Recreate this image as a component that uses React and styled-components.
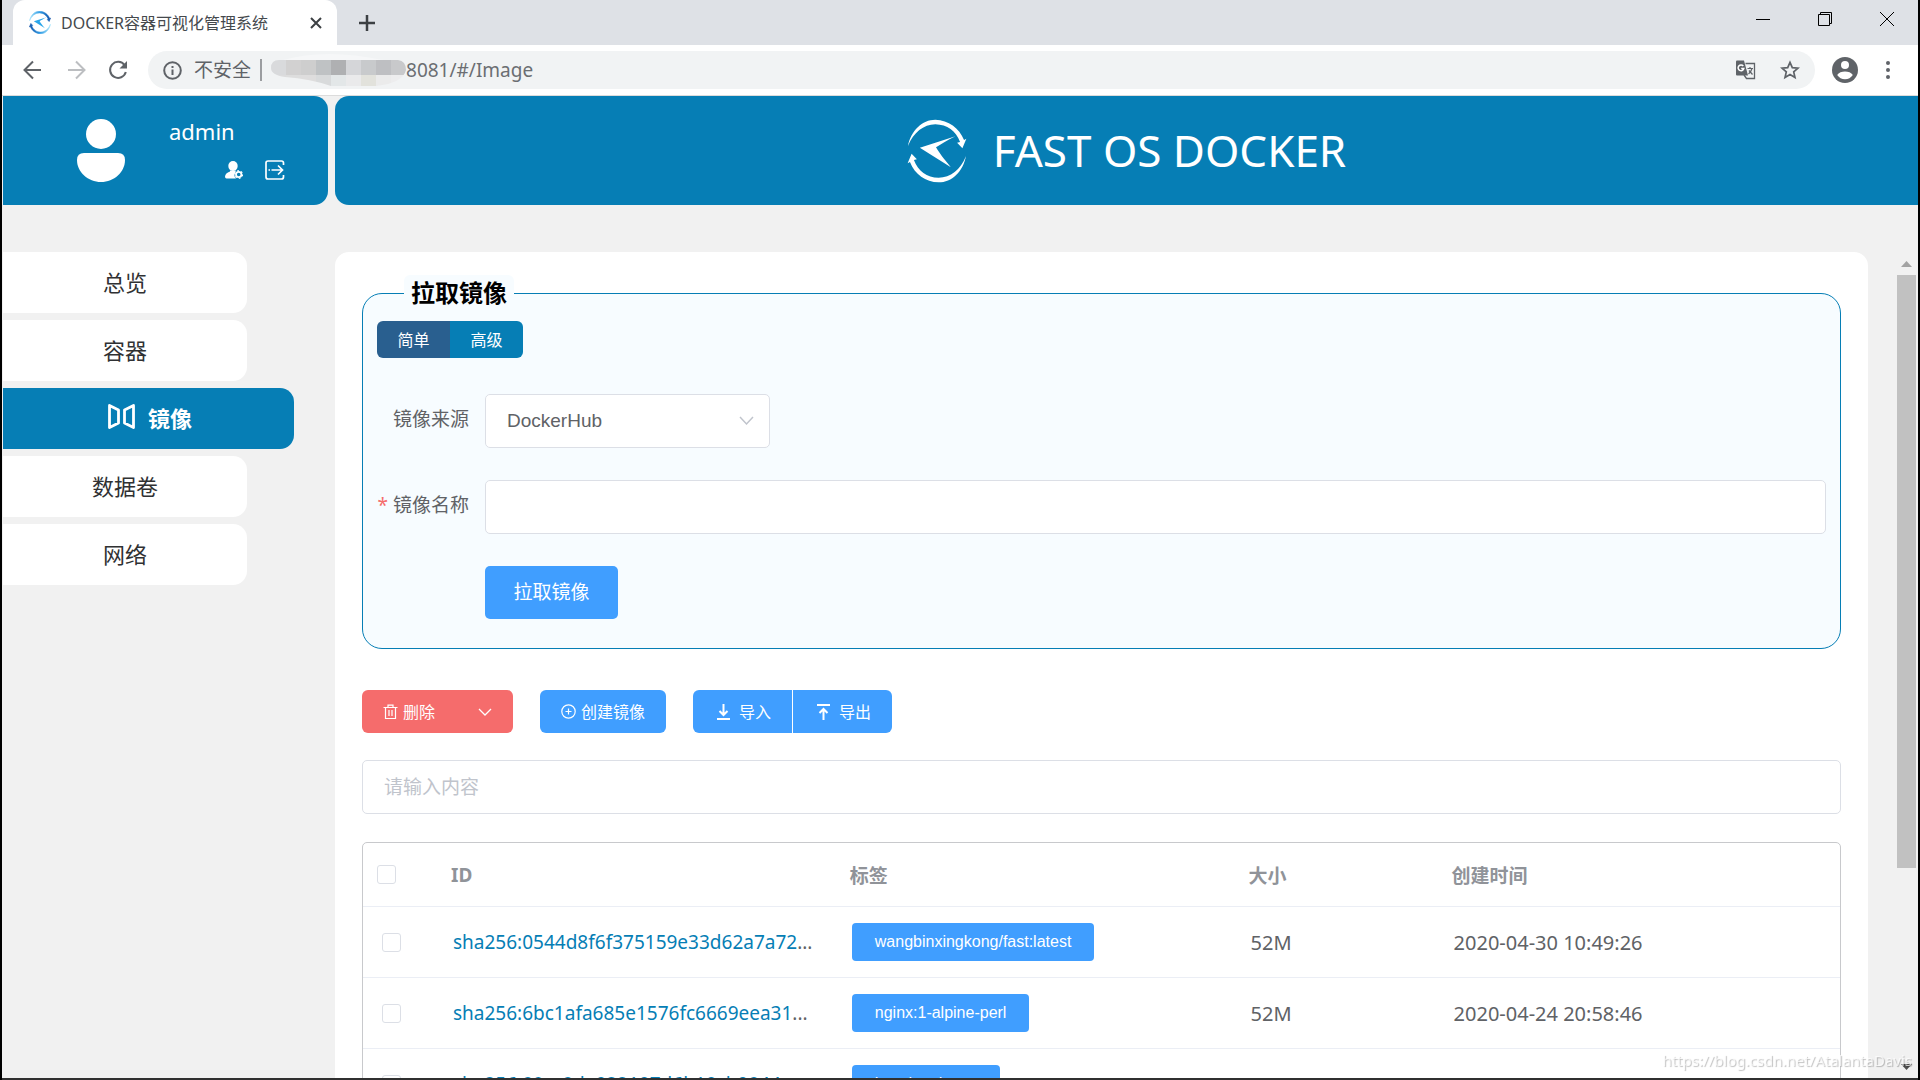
import { useState } from "react";
import styled, { createGlobalStyle } from "styled-components";

const BLUE = "#067eb5";
const PRIMARY = "#409eff";
const DANGER = "#f56c6c";
const SANS = `"Noto Sans", "Noto Sans CJK SC", sans-serif`;
const ARIAL = `"Liberation Sans", "Noto Sans CJK SC", sans-serif`;

const GlobalStyle = createGlobalStyle`
  * {
    box-sizing: border-box;
  }
  body {
    margin: 0;
    background: #f1f1f1;
    font-family: ${SANS};
  }
  button, input, select {
    font-family: inherit;
    margin: 0;
  }
  button {
    border: 0;
    padding: 0;
    background: none;
    cursor: pointer;
  }
  svg {
    display: block;
    flex: none;
  }
`;

/* ---------- browser window ---------- */

const Window = styled.div`
  height: 100vh;
  display: flex;
  flex-direction: column;
  overflow: hidden;
  border: solid #000;
  border-width: 0 2px;
  box-shadow: inset 0 -2px 0 #303030;
  padding-bottom: 2px;
`;

const TabStrip = styled.div`
  display: flex;
  flex: none;
  height: 45px;
  padding-left: 11px;
  background: #dee1e6;
`;

const Tab = styled.div`
  display: flex;
  align-items: center;
  width: 324px;
  padding: 0 15px 0 16px;
  border-radius: 12px 12px 0 0;
  background: #fff;
`;

const TabTitle = styled.span`
  flex: 1;
  margin-left: 10px;
  font-size: 16px;
  line-height: 24px;
  white-space: nowrap;
  color: #45494d;
`;

const NewTab = styled.button`
  display: grid;
  place-items: center;
  width: 60px;
`;

const WindowButtons = styled.div`
  display: flex;
  align-items: flex-start;
  gap: 48px;
  margin-left: auto;
  padding: 12px 24px 0 0;
`;

const AddressBar = styled.div`
  display: flex;
  align-items: center;
  flex: none;
  height: 51px;
  padding: 0 28px 0 20px;
  background: #fff;
  border-bottom: 1px solid #dcdcdc;
`;

const NavButtons = styled.div`
  display: flex;
  gap: 21px;
  margin-right: 20px;
`;

const Omnibox = styled.div`
  display: flex;
  align-items: center;
  flex: 1;
  height: 38px;
  padding: 0 15px;
  border-radius: 19px;
  background: #f1f3f4;
  color: #5f6368;
  font-size: 19px;
`;

const Insecure = styled.span`
  margin: 0 9px 0 12px;
  padding-right: 9px;
  border-right: 2px solid #9b9da0;
  line-height: 22px;
`;

const Url = styled.input`
  flex: 1;
  min-width: 0;
  padding: 0;
  border: 0;
  outline: 0;
  background: none;
  color: #6b6e72;
  font-size: 19px;
`;

const OmniActions = styled.div`
  display: flex;
  gap: 24px;
`;

const Profile = styled.div`
  display: flex;
  align-items: center;
  gap: 28px;
  margin-left: 17px;
`;

/* ---------- application ---------- */

const Page = styled.div`
  display: flex;
  flex-direction: column;
  flex: 1;
  min-height: 0;
  padding-left: 1px;
  background: #f1f1f1;
`;

const Header = styled.header`
  display: grid;
  grid-template-columns: 325px 1fr;
  gap: 7px;
  flex: none;
  height: 109px;
  color: #fff;
`;

const UserBox = styled.div`
  display: flex;
  align-items: center;
  padding-left: 74px;
  border-radius: 0 14px 14px 0;
  background: ${BLUE};
`;

const UserInfo = styled.div`
  display: flex;
  flex-direction: column;
  gap: 14px;
  margin-left: 44px;
  padding-bottom: 5px;
`;

const UserName = styled.span`
  font-size: 22px;
  line-height: 30px;
`;

const UserActions = styled.div`
  display: flex;
  gap: 22px;
  padding-left: 56px;
`;

const Banner = styled.div`
  display: flex;
  align-items: center;
  justify-content: center;
  gap: 26px;
  border-radius: 14px 0 0 14px;
  background: ${BLUE};
`;

const BannerTitle = styled.h1`
  margin: 0;
  padding-bottom: 2px;
  font-size: 44px;
  line-height: 60px;
  font-weight: 400;
`;

const Body = styled.div`
  display: grid;
  grid-template-columns: 325px 1fr;
  gap: 7px;
  flex: 1;
  min-height: 0;
  padding-top: 47px;
`;

const Sidebar = styled.nav`
  display: flex;
  flex-direction: column;
  gap: 7px;
`;

const NavItem = styled.a`
  display: flex;
  align-items: center;
  justify-content: center;
  gap: 13px;
  width: ${(p) => (p.$active ? 291 : 244)}px;
  height: 61px;
  padding: 0 0 4px ${(p) => (p.$active ? 3 : 0)}px;
  border-radius: 0 14px 14px 0;
  background: ${(p) => (p.$active ? BLUE : "#fff")};
  color: ${(p) => (p.$active ? "#fff" : "#303133")};
  font-size: 22px;
  font-weight: ${(p) => (p.$active ? 700 : 400)};
  text-decoration: none;
`;

const ScrollArea = styled.div`
  display: flex;
  min-width: 0;
  min-height: 0;
`;

const Card = styled.main`
  flex: 1;
  min-width: 0;
  overflow: hidden;
  margin-right: 29px;
  padding: 23px 27px 0;
  border-radius: 14px 14px 0 0;
  background: #fff;
`;

const Scrollbar = styled.div`
  display: flex;
  flex-direction: column;
  width: 21px;
  padding-right: 2px;
`;

const ScrollArrow = styled.div`
  display: grid;
  place-items: center;
  height: 23px;
`;

const ScrollTrack = styled.div`
  flex: 1;
`;

const ScrollThumb = styled.div`
  height: 76%;
  background: #c1c1c1;
`;

const Fieldset = styled.fieldset`
  min-width: 0;
  margin: 0;
  padding: 10px 14px 29px;
  border: 1px solid ${BLUE};
  border-radius: 20px;
  background: #f7fcff;
`;

const Legend = styled.legend`
  margin-left: 27px;
  padding: 0 7px;
  border-radius: 6px;
  background: #f7fcff;
  color: #000;
  font-size: 24px;
  font-weight: 700;
  line-height: 36px;
`;

const ModeSwitch = styled.div`
  display: inline-flex;
  overflow: hidden;
  margin-bottom: 36px;
  border-radius: 6px;
  vertical-align: top;
`;

const ModeButton = styled.button`
  width: 73px;
  height: 37px;
  padding-bottom: 2px;
  background: ${(p) => (p.$on ? "#295f8f" : BLUE)};
  color: #fff;
  font-size: 16px;
`;

const Form = styled.form`
  display: grid;
  grid-template-columns: 92px 1fr;
  column-gap: 16px;
  row-gap: 32px;
  align-items: center;
`;

const Label = styled.label`
  display: flex;
  justify-content: flex-end;
  color: #606266;
  font-size: 19px;
  line-height: 50px;
  padding-bottom: 4px;
  white-space: nowrap;
`;

const Required = styled.span`
  margin-right: 5px;
  color: ${DANGER};
`;

const SelectBox = styled.div`
  position: relative;
  width: 285px;

  svg {
    position: absolute;
    top: 22px;
    right: 16px;
    pointer-events: none;
  }
`;

const Select = styled.select`
  appearance: none;
  display: block;
  width: 100%;
  height: 54px;
  padding: 0 40px 2px 21px;
  border: 1px solid #dcdfe6;
  border-radius: 5px;
  background: #fff;
  color: #606266;
  font-family: ${ARIAL};
  font-size: 19px;
`;

const TextInput = styled.input`
  display: block;
  width: 100%;
  height: 54px;
  padding: 0 21px;
  border: 1px solid #dcdfe6;
  border-radius: 5px;
  background: #fff;
  color: #606266;
  font-size: 19px;

  &::placeholder {
    color: #c0c4cc;
    opacity: 1;
  }
`;

const SubmitButton = styled.button`
  grid-column: 2;
  justify-self: start;
  width: 133px;
  height: 53px;
  padding-bottom: 3px;
  border-radius: 5px;
  background: ${PRIMARY};
  color: #fff;
  font-size: 19px;
`;

const Toolbar = styled.div`
  display: flex;
  gap: 27px;
  margin: 41px 0 27px;
`;

const ToolButton = styled.button`
  display: flex;
  align-items: center;
  gap: 5px;
  height: 43px;
  padding: 0 21px;
  border-radius: 6px;
  background: ${(p) => (p.$danger ? DANGER : PRIMARY)};
  color: #fff;
  font-size: 16px;
`;

const ToolText = styled.span`
  padding-bottom: 2px;
`;

const DropMark = styled.span`
  margin-left: 38px;
`;

const ButtonGroup = styled.div`
  display: flex;
  gap: 1px;
  overflow: hidden;
  border-radius: 6px;

  ${ToolButton} {
    gap: 9px;
    padding-left: 24px;
    border-radius: 0;
  }
`;

const TableBox = styled.div`
  margin-top: 28px;
  border: 1px solid #c8c9cc;
  border-radius: 5px;
`;

const Table = styled.table`
  width: 100%;
  table-layout: fixed;
  border-spacing: 0;
  font-size: 19px;
  text-align: left;
  color: #606266;
`;

const Th = styled.th`
  height: 64px;
  width: ${(p) => p.$width || "auto"};
  padding: 0 14px;
  border-bottom: 1px solid #ebeef5;
  color: #909399;
`;

const Td = styled.td`
  height: 71px;
  padding: 0 ${(p) => (p.$check ? 19 : 16)}px;
  border-bottom: 1px solid #ebeef5;
  font-size: ${(p) => (p.$figure ? 20 : 19)}px;
  white-space: nowrap;
`;

const Check = styled.input`
  appearance: none;
  display: block;
  width: 19px;
  height: 19px;
  border: 1px solid #dcdfe6;
  border-radius: 3px;
  background: #fff;

  &:checked {
    background: ${PRIMARY};
  }
`;

const IdLink = styled.a`
  color: ${BLUE};
  text-decoration: none;
`;

const Tag = styled.button`
  display: block;
  height: 38px;
  padding: 0 23px;
  border-radius: 4px;
  background: ${PRIMARY};
  color: #fff;
  font-family: ${ARIAL};
  font-size: 16px;
`;

const Watermark = styled.div`
  position: fixed;
  right: 8px;
  bottom: 8px;
  color: rgba(255, 255, 255, 0.7);
  font-size: 15px;
  line-height: 24px;
  text-shadow: 1px 1px 1px rgba(0, 0, 0, 0.25);
  pointer-events: none;
`;

/* ---------- icons ---------- */

const arc =
  "M49 122C58 75 92 42 132 42C172 44 204 66 219 104L226 100L214 129L198 112L207 110C194 76 168 57 132 56C96 57 66 80 49 122Z";

function Logo({ width, height, tinted }) {
  return (
    <svg width={width} height={height} viewBox="47 40 180 194" fill="#fff">
      <defs>
        <linearGradient id="swoosh" x1="0" x2="1">
          <stop offset="0" stopColor="#a5e3fb" />
          <stop offset="0.5" stopColor="#2f9be4" />
          <stop offset="1" stopColor="#0c4fa8" />
        </linearGradient>
      </defs>
      <g
        fill={tinted ? "url(#swoosh)" : "#fff"}
        stroke={tinted ? "url(#swoosh)" : "none"}
        strokeWidth={tinted ? 5 : 0}
      >
        <path d={arc} />
        <path d={arc} transform="rotate(180 137 137)" />
      </g>
      <path
        d="M85 127L193 92C167 105 148 116 134 126C143 142 157 160 179 186Z"
        fill={tinted ? "#2ba6ea" : "#fff"}
      />
    </svg>
  );
}

function Line({ w, h = w, d, stroke = 2, color = "currentColor" }) {
  return (
    <svg
      width={w}
      height={h}
      viewBox={`0 0 ${w} ${h}`}
      fill="none"
      stroke={color}
      strokeWidth={stroke}
    >
      <path d={d} />
    </svg>
  );
}

// pixelated host part of the url
function Mosaic() {
  const top = ["#d9dadc", "#d2d1d1", "#cecece", "#bfc2c4", "#afb0b2", "#d5d6d9", "#c8cacc", "#bebfc2", "#c8c9cb"];
  const low = ["#dcdcdd", "#dddddd", "#dedddd", "#d8dadb", "#e3e7e8", "#eaeaeb", "#e2e2dc", "#ebebeb", "#ededee"];
  return (
    <svg width="135" height="38" viewBox="0 0 135 38">
      <clipPath id="smear">
        <path d="M8 9H127Q135 10 135 19Q132 32 105 35H60Q40 28 14 26Q0 24 0 17Q0 9 8 9Z" />
      </clipPath>
      <path d="M12 9Q55 -3 112 9Z" fill="#f6f7f8" />
      <g clipPath="url(#smear)">
        {top.map((c, i) => (
          <rect key={i} x={i * 15} y="9" width="15" height="15" fill={c} />
        ))}
        {low.map((c, i) => (
          <rect key={i} x={i * 15} y="24" width="15" height="12" fill={c} />
        ))}
      </g>
    </svg>
  );
}

function ReloadIcon() {
  return (
    <svg width="20" height="20" viewBox="0 0 20 20" fill="none" stroke="#5f6368" strokeWidth="2">
      <path d="M16.6 5.2A8 8 0 1 0 17.8 12" />
      <path d="M19 1V8.500H11.500Z" fill="#5f6368" stroke="none" />
    </svg>
  );
}

function InfoIcon() {
  return (
    <svg width="19" height="19" viewBox="0 0 19 19" fill="none" stroke="#5f6368" strokeWidth="2">
      <circle cx="9.500" cy="9.500" r="8.300" />
      <path d="M9.500 8.500V14M9.500 5V7" />
    </svg>
  );
}

function TranslateIcon() {
  return (
    <svg width="20" height="20" viewBox="0 0 20 20" fill="none" stroke="#5f6368">
      <path d="M9.500 3.500H18.500V18.500H10.500L8 15" strokeWidth="1.300" />
      <path d="M0 1.500Q0 .5 1 .5H8L12 15.500H1Q0 15.500 0 14.500Z" fill="#5f6368" stroke="none" />
      <path d="M7.300 6A2.900 2.900 0 1 0 7.800 8.600H5.200" stroke="#fff" strokeWidth="1.500" />
      <path d="M11.500 8.500H17M14 7V8.500M16 8.500Q15 12 12.500 14M13 10.500L16.500 14.500" strokeWidth="1.200" />
    </svg>
  );
}

function StarIcon() {
  return (
    <svg width="20" height="20" viewBox="0 0 20 20" fill="none" stroke="#5f6368" strokeWidth="1.700">
      <path d="M10 2.300L12.300 7.600L18 8.100L13.700 11.900L15 17.600L10 14.600L5 17.600L6.300 11.900L2 8.100L7.700 7.600Z" />
    </svg>
  );
}

function ProfileIcon() {
  return (
    <svg width="26" height="26" viewBox="0 0 26 26">
      <circle cx="13" cy="13" r="13" fill="#5f6368" />
      <circle cx="13" cy="8" r="4" fill="#fff" />
      <path d="M5.200 18C6.500 15.500 10 14.500 13 14.500S19.500 15.500 20.800 18Q18 22.200 13 22.200T5.200 18Z" fill="#fff" />
    </svg>
  );
}

function MoreIcon() {
  return (
    <svg width="4" height="18" viewBox="0 0 4 18" fill="#5f6368">
      <circle cx="2" cy="2" r="2" />
      <circle cx="2" cy="9" r="2" />
      <circle cx="2" cy="16" r="2" />
    </svg>
  );
}

function AvatarIcon() {
  return (
    <svg width="48" height="63" viewBox="0 0 48 63" fill="#fff">
      <circle cx="24" cy="15" r="15" />
      <path d="M7 34H41Q48 34 48 41C48 53 37 63 24 63S0 53 0 41Q0 34 7 34Z" />
    </svg>
  );
}

function UserCogIcon() {
  return (
    <svg width="18" height="20" viewBox="0 0 18 20" fill="#fff">
      <ellipse cx="8" cy="6" rx="4.700" ry="5" />
      <path d="M5 10.500H11L10 13Q8.500 16 11 18.500H1.500Q0 18.500 0 16.500Q.3 13 5 11.500Z" />
      <circle cx="13.700" cy="14.500" r="2.700" fill="none" stroke="#fff" strokeWidth="1.800" />
      <circle cx="13.700" cy="14.500" r="3.800" fill="none" stroke="#fff" strokeWidth="1.200" strokeDasharray="1.700 2.280" />
    </svg>
  );
}

function LogoutIcon() {
  return (
    <svg width="20" height="20" viewBox="0 0 20 20" fill="none" stroke="#fff" strokeWidth="1.700">
      <path d="M18.500 5V3Q18.500 1 16.500 1H3Q1 1 1 3V17Q1 19 3 19H16.500Q18.500 19 18.500 17V15" />
      <path d="M3.500 10H5M6.500 10H17.500M13 5.500L17.500 10L13 14.500" />
    </svg>
  );
}

function ImageIcon() {
  return (
    <svg width="27" height="25" viewBox="0 0 27 25" fill="none" stroke="#fff" strokeWidth="2.800" strokeLinejoin="round">
      <path d="M1.500 1.500L10.500 6V19L1.500 23.500ZM25.500 1.500L16.500 6V19L25.500 23.500Z" />
    </svg>
  );
}

function TrashIcon() {
  return (
    <svg width="15" height="16" viewBox="0 0 15 16" fill="none" stroke="#fff" strokeWidth="1.200">
      <path d="M.5 3.500H14.500M5 3.500V1.200H10V3.500M2.500 3.500V14.500H12.500V3.500M6 6V12M9 6V12" />
    </svg>
  );
}

function PlusCircleIcon() {
  return (
    <svg width="15" height="15" viewBox="0 0 15 15" fill="none" stroke="#fff" strokeWidth="1.200">
      <circle cx="7.500" cy="7.500" r="6.700" />
      <path d="M7.500 4.500V10.500M4.500 7.500H10.500" />
    </svg>
  );
}

/* ---------- page ---------- */

const menu = ["总览", "容器", "镜像", "数据卷", "网络"];

const images = [
  { id: "sha256:0544d8f6f375159e33d62a7a72", tag: "wangbinxingkong/fast:latest", size: "52M", time: "2020-04-30 10:49:26" },
  { id: "sha256:6bc1afa685e1576fc6669eea31", tag: "nginx:1-alpine-perl", size: "52M", time: "2020-04-24 20:58:46" },
  { id: "sha256:89cc8da022107d6b10cb0844", tag: "busybox:latest", size: "19M", time: "2020-04-24 20:58:07" },
];

function BrowserChrome() {
  return (
    <>
      <TabStrip>
        <Tab>
          <Logo width={22} height={23} tinted />
          <TabTitle>DOCKER容器可视化管理系统</TabTitle>
          <button aria-label="关闭标签页">
            <Line w={12} d="M1 1L11 11M11 1L1 11" color="#3c4043" />
          </button>
        </Tab>
        <NewTab aria-label="新标签页">
          <Line w={16} d="M8 0V16M0 8H16" color="#3c4043" stroke={2.5} />
        </NewTab>
        <WindowButtons>
          <button aria-label="最小化">
            <Line w={14} d="M0 7.500H14" stroke={1} color="#000" />
          </button>
          <button aria-label="还原">
            <Line w={14} d="M.5 2.500H11.500V13.500H.5ZM2.500 2.500V.5H13.500V11.500H11.500" stroke={1} color="#000" />
          </button>
          <button aria-label="关闭">
            <Line w={14} d="M0 0L14 14M14 0L0 14" stroke={1} color="#000" />
          </button>
        </WindowButtons>
      </TabStrip>
      <AddressBar>
        <NavButtons>
          <button aria-label="后退">
            <Line w={22} h={20} d="M19 10H3M11 1.500L2.500 10L11 18.500" color="#5f6368" />
          </button>
          <button aria-label="前进">
            <Line w={22} h={20} d="M3 10H19M11 1.500L19.500 10L11 18.500" color="#bcbec1" />
          </button>
          <button aria-label="重新加载">
            <ReloadIcon />
          </button>
        </NavButtons>
        <Omnibox>
          <InfoIcon />
          <Insecure>不安全</Insecure>
          <Mosaic />
          <Url aria-label="地址" defaultValue="8081/#/Image" />
          <OmniActions>
            <TranslateIcon />
            <StarIcon />
          </OmniActions>
        </Omnibox>
        <Profile>
          <ProfileIcon />
          <MoreIcon />
        </Profile>
      </AddressBar>
    </>
  );
}

function PullForm() {
  const [mode, setMode] = useState("简单");

  return (
    <Fieldset>
      <Legend>拉取镜像</Legend>
      <ModeSwitch>
        {["简单", "高级"].map((name) => (
          <ModeButton key={name} $on={mode === name} onClick={() => setMode(name)}>
            {name}
          </ModeButton>
        ))}
      </ModeSwitch>
      <Form onSubmit={(e) => e.preventDefault()}>
        <Label htmlFor="source">镜像来源</Label>
        <SelectBox>
          <Select id="source">
            <option>DockerHub</option>
          </Select>
          <Line w={15} h={10} d="M1 1L7.500 8L14 1" stroke={1.5} color="#c0c4cc" />
        </SelectBox>
        <Label htmlFor="name">
          <Required>*</Required>镜像名称
        </Label>
        <TextInput id="name" />
        <SubmitButton type="submit">拉取镜像</SubmitButton>
      </Form>
    </Fieldset>
  );
}

function ImageTable() {
  return (
    <TableBox>
      <Table>
        <thead>
          <tr>
            <Th $width="74px">
              <Check type="checkbox" aria-label="全选" />
            </Th>
            <Th $width="27%">ID</Th>
            <Th $width="27%">标签</Th>
            <Th $width="203px">大小</Th>
            <Th>创建时间</Th>
          </tr>
        </thead>
        <tbody>
          {images.map((image) => (
            <tr key={image.id}>
              <Td $check>
                <Check type="checkbox" aria-label={image.id} />
              </Td>
              <Td>
                <IdLink href="#/Image">{image.id}</IdLink>...
              </Td>
              <Td>
                <Tag>{image.tag}</Tag>
              </Td>
              <Td $figure>{image.size}</Td>
              <Td $figure>{image.time}</Td>
            </tr>
          ))}
        </tbody>
      </Table>
    </TableBox>
  );
}

export default function App() {
  return (
    <Window>
      <GlobalStyle />
      <BrowserChrome />
      <Page>
        <Header>
          <UserBox>
            <AvatarIcon />
            <UserInfo>
              <UserName>admin</UserName>
              <UserActions>
                <button aria-label="用户设置">
                  <UserCogIcon />
                </button>
                <button aria-label="退出">
                  <LogoutIcon />
                </button>
              </UserActions>
            </UserInfo>
          </UserBox>
          <Banner>
            <Logo width={60} height={64} />
            <BannerTitle>FAST OS DOCKER</BannerTitle>
          </Banner>
        </Header>
        <Body>
          <Sidebar>
            {menu.map((name) => (
              <NavItem key={name} href="#/Image" $active={name === "镜像"}>
                {name === "镜像" && <ImageIcon />}
                {name}
              </NavItem>
            ))}
          </Sidebar>
          <ScrollArea>
            <Card>
              <PullForm />
              <Toolbar>
                <ToolButton $danger>
                  <TrashIcon />
                  <ToolText>删除</ToolText>
                  <DropMark>
                    <Line w={14} h={8} d="M1 1L7 7L13 1" stroke={1.3} />
                  </DropMark>
                </ToolButton>
                <ToolButton>
                  <PlusCircleIcon />
                  <ToolText>创建镜像</ToolText>
                </ToolButton>
                <ButtonGroup>
                  <ToolButton>
                    <Line w={13} h={16} d="M6.500 0V11M2.500 7L6.500 11L10.500 7M0 15H13" />
                    <ToolText>导入</ToolText>
                  </ToolButton>
                  <ToolButton>
                    <Line w={13} h={16} d="M6.500 16V5M2.500 9L6.500 5L10.500 9M0 1H13" />
                    <ToolText>导出</ToolText>
                  </ToolButton>
                </ButtonGroup>
              </Toolbar>
              <TextInput placeholder="请输入内容" aria-label="搜索" />
              <ImageTable />
            </Card>
            <Scrollbar>
              <ScrollArrow>
                <svg width="11" height="6" viewBox="0 0 11 6">
                  <path d="M0 6L5.500 0L11 6Z" fill="#a3a3a3" />
                </svg>
              </ScrollArrow>
              <ScrollTrack>
                <ScrollThumb />
              </ScrollTrack>
              <ScrollArrow>
                <svg width="11" height="6" viewBox="0 0 11 6">
                  <path d="M0 0L5.500 6L11 0Z" fill="#505050" />
                </svg>
              </ScrollArrow>
            </Scrollbar>
          </ScrollArea>
        </Body>
      </Page>
      <Watermark>https://blog.csdn.net/AtalantaDavis</Watermark>
    </Window>
  );
}
